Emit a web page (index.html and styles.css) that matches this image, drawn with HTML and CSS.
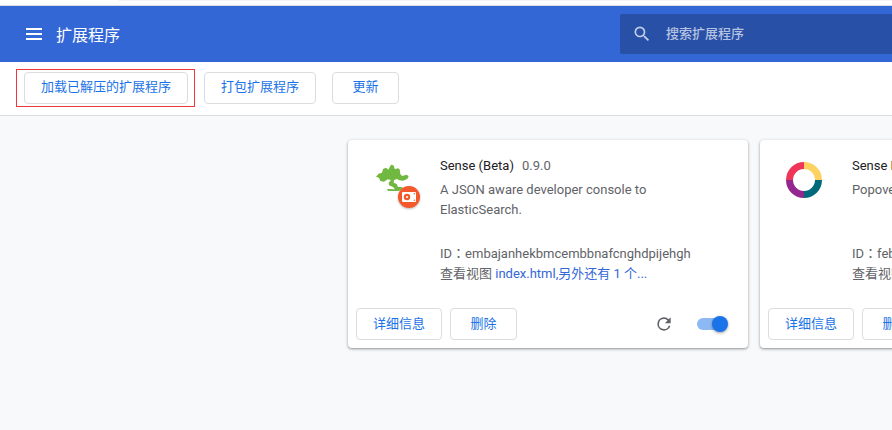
FILE: index.html
```html
<!DOCTYPE html>
<html lang="zh-CN">
<head>
<meta charset="utf-8">
<title>扩展程序</title>
<link rel="stylesheet" href="styles.css">
</head>
<body>
<div class="browser-edge"><span class="address-edge"></span></div>
<header class="header">
  <button class="menu" aria-label="主菜单"><svg width="24" height="24" viewBox="0 0 24 24" fill="currentColor"><path d="M4 18h16v-2H4v2zm0-5h16v-2H4v2zm0-7v2h16V6H4z"/></svg></button>
  <h1>扩展程序</h1>
  <label class="search">
    <svg width="20" height="20" viewBox="0 0 24 24" fill="currentColor"><path d="M15.5 14h-.79l-.28-.27A6.47 6.47 0 0 0 16 9.5 6.5 6.5 0 1 0 9.5 16c1.61 0 3.09-.59 4.23-1.57l.27.28v.79l5 4.99L20.49 19l-4.99-5zm-6 0C7.01 14 5 11.99 5 9.5S7.01 5 9.5 5 14 7.01 14 9.5 11.99 14 9.5 14z"/></svg>
    <input type="search" placeholder="搜索扩展程序" aria-label="搜索扩展程序">
  </label>
</header>
<nav class="toolbar">
  <div class="highlight"><button class="btn">加载已解压的扩展程序</button></div>
  <button class="btn">打包扩展程序</button>
  <button class="btn">更新</button>
</nav>
<main class="cards">
  <article class="card">
    <div class="info">
      <div class="icon">
        <svg width="36" height="36" viewBox="6 6 108 108" fill="#70b83f"><path d="M12 50l8-9 10-3 3-11 9-4 7 6 8-15 7 2 5 12 8-3 6 3 2 14 5 6 14-4 6 5-4 8-13 5-11-1-7-4-9 3-1 8 9 4 4 9h13v7l-10 5H49l-5-6 25 1-6-7-12-5-1-8 7-8-10-2-11 7-11-2-4-10z"/></svg>
        <svg class="badge" width="22" height="22" viewBox="0 0 22 22"><circle cx="11" cy="11" r="11" fill="#f4592c"/><rect x="4" y="6" width="14" height="10" rx="1" fill="#fff"/><circle cx="9" cy="11" r="3.2" fill="#f4592c"/><circle cx="9" cy="11" r="1" fill="#fff"/><circle cx="16.3" cy="7.8" r=".7" fill="#f4592c"/><circle cx="16.3" cy="14.2" r=".7" fill="#f4592c"/></svg>
      </div>
      <div class="content">
        <div class="title"><h2>Sense (Beta)</h2><span>0.9.0</span></div>
        <p class="description">A JSON aware developer console to ElasticSearch.</p>
        <p>ID<span lang="zh-TW" class="colon">：</span>embajanhekbmcembbnafcnghdpijehgh</p>
        <p>查看视图 <a href="#">index.html,另外还有 1 个...</a></p>
      </div>
    </div>
    <div class="actions">
      <button class="btn">详细信息</button>
      <button class="btn">删除</button>
      <button class="reload" aria-label="重新加载"><svg width="20" height="20" viewBox="0 0 24 24" fill="currentColor"><path d="M17.65 6.35A7.96 7.96 0 0 0 12 4a8 8 0 1 0 7.73 10h-2.08A6 6 0 1 1 12 6c1.66 0 3.14.69 4.22 1.78L13 11h7V4l-2.35 2.35z"/></svg></button>
      <input class="toggle" type="checkbox" role="switch" aria-label="启用 Sense (Beta)" checked>
    </div>
  </article>
  <article class="card">
    <div class="info">
      <div class="icon">
        <svg width="36" height="36" viewBox="0 0 36 36"><path fill="#ef3659" d="M0 18A18 18 0 0 1 18 0v7A11 11 0 0 0 7 18z"/><path fill="#fdd260" d="M18 0a18 18 0 0 1 18 18h-7A11 11 0 0 0 18 7z"/><path fill="#006a7b" d="M36 18a18 18 0 0 1-18 18v-7a11 11 0 0 0 11-11z"/><path fill="#93278f" d="M18 36A18 18 0 0 1 0 18h7a11 11 0 0 0 11 11z"/></svg>
      </div>
      <div class="content">
        <div class="title"><h2>Sense P</h2></div>
        <p class="description">Popove</p>
        <p>ID<span lang="zh-TW" class="colon">：</span>feb</p>
        <p>查看视图</p>
      </div>
    </div>
    <div class="actions">
      <button class="btn">详细信息</button>
      <button class="btn">删除</button>
    </div>
  </article>
</main>
</body>
</html>
```
FILE: styles.css
```css
* { box-sizing: border-box; }
body {
  margin: 0;
  min-height: 100vh;
  overflow: hidden;
  background: #f8f9fa;
  color: #5f6368;
  font: 13px/20px Roboto, "Noto Sans CJK SC", sans-serif;
}
h1, h2, p { margin: 0; font-weight: 400; }
button, input { font: inherit; }
button { padding: 0; border: 0; background: none; }
svg { display: block; }
.browser-edge {
  height: 6px;
  padding-left: 118px;
  background: #fff;
  border-bottom: 1px solid #dadce0;
}
.address-edge { display: block; height: 1px; background: #f1f3f4; }
.header {
  display: flex;
  align-items: center;
  height: 56px;
  padding-left: 22px;
  background: #3367d6;
  color: #fff;
}
.menu { color: inherit; }
.header h1 { flex: 1; padding: 4px 0 0 10px; font-size: 16px; line-height: 24px; }
.search {
  display: flex;
  align-items: center;
  gap: 14px;
  width: 272px;
  height: 40px;
  padding-left: 12px;
  background: #2850a7;
  border-radius: 2px 0 0 2px;
  color: #c2cee8;
}
.search input {
  flex: 1;
  min-width: 0;
  padding: 0;
  border: 0;
  outline: 0;
  background: none;
  color: #fff;
  font-weight: 500;
}
.search input::placeholder { color: #b5c3e2; }
.toolbar {
  display: flex;
  align-items: center;
  gap: 16px;
  height: 54px;
  padding: 0 16px 2px;
  background: #fff;
  border-bottom: 1px solid #dadce0;
}
.highlight { margin-right: -7px; padding: 2px 6px 2px 7px; border: 1px solid #f0373c; }
.btn {
  display: block;
  min-width: 67px;
  height: 32px;
  padding: 0 16px 1px;
  background: #fff;
  border: 1px solid #dadce0;
  border-radius: 4px;
  color: #1a73e8;
  white-space: nowrap;
}
.cards {
  display: grid;
  grid-template-columns: repeat(2, 400px);
  gap: 12px;
  padding: 24px 0 24px 348px;
  overflow: hidden;
}
.card {
  display: flex;
  flex-direction: column;
  min-height: 208px;
  background: #fff;
  border-radius: 4px;
  box-shadow: 0 1px 2px rgba(60, 64, 67, .4), 0 1px 3px 1px rgba(60, 64, 67, .15);
}
.info { display: flex; flex: 1; padding: 16px 20px 0; }
.icon { position: relative; width: 72px; height: 36px; margin-top: 6px; padding-left: 6px; }
.badge { position: absolute; top: 24px; left: 30px; filter: drop-shadow(0 1px 1px #bbb); }
.content { flex: 1; min-width: 0; }
.title { display: flex; gap: 8px; margin-bottom: 4px; }
.title h2 { color: #202124; font-size: 13px; line-height: 20px; }
.description { max-width: 240px; min-height: 64px; }
.colon { font-family: "Noto Sans CJK TC", sans-serif; line-height: 1; }
.content a { color: #3367d6; text-decoration: none; }
.actions { display: flex; align-items: center; gap: 8px; padding: 8px; }
.reload { margin-left: auto; color: #5f6368; }
.toggle {
  appearance: none;
  display: flex;
  align-items: center;
  justify-content: flex-end;
  width: 31px;
  height: 16px;
  margin: 0 12px 0 15px;
  position: relative;
}
.toggle::before {
  content: "";
  position: absolute;
  left: 0;
  width: 28px;
  height: 12px;
  border-radius: 6px;
  background: #8cb9f4;
}
.toggle::after {
  content: "";
  position: relative;
  width: 16px;
  height: 16px;
  border-radius: 50%;
  background: #1a73e8;
  box-shadow: 0 1px 3px rgba(0, 0, 0, .4);
}
```
